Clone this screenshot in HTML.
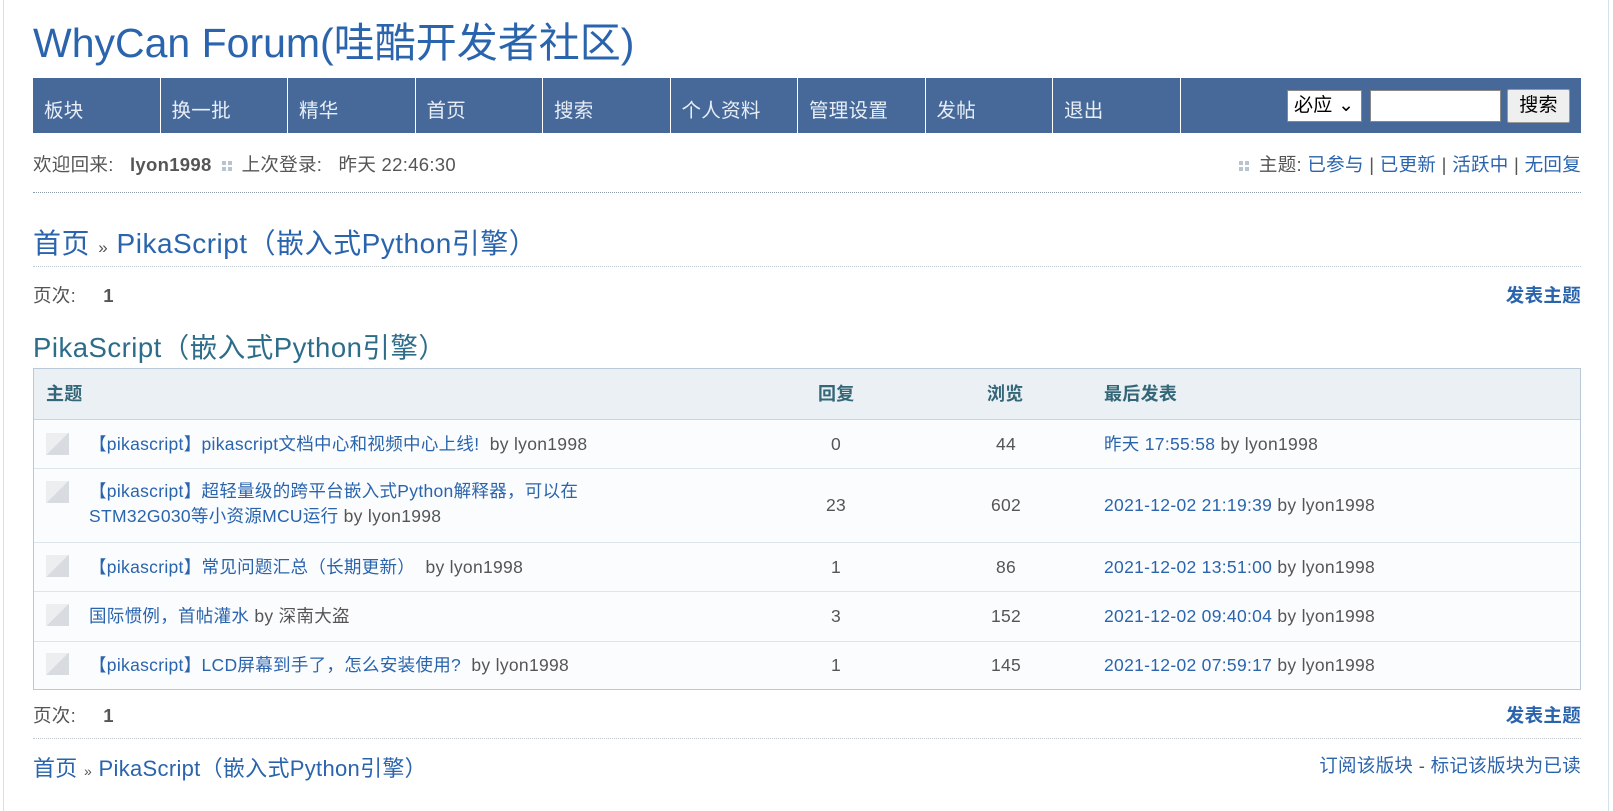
<!DOCTYPE html>
<html><head><meta charset="utf-8">
<style>
*{margin:0;padding:0;box-sizing:border-box}
html{overflow:hidden;height:811px}
body{width:1613px;height:811px;background:#fff;font-family:"Liberation Sans","Noto Sans CJK SC",sans-serif;font-size:17.5px;letter-spacing:.3px;color:#555;position:relative;overflow:hidden}
.frame{position:absolute;left:3px;top:0;width:1606px;height:811px;border:1px solid #d6e0ea;border-top:none;border-bottom:none}
.a{position:absolute;white-space:nowrap}
a{color:#2a64ad;text-decoration:none}
.title{left:33px;top:16px;font-size:41px;letter-spacing:0;color:#2a64ad;line-height:54px}
.nav{position:absolute;left:33px;top:78px;width:1548px;height:55px;background:#46699a}
.nav span{position:absolute;top:0;height:55px;line-height:66px;color:#e8eef6;font-size:19.5px;padding-left:11px;border-right:1px solid #fff;width:127.5px}
.sel{position:absolute;left:1287px;top:90px;width:75px;height:32px;background:#fff;border:1px solid #888;font-size:19px;color:#000;padding-left:6px;line-height:30px}
.inp{position:absolute;left:1370px;top:90px;width:131px;height:32px;background:#fff;border:1px solid #888}
.btn{position:absolute;left:1507px;top:89px;width:63px;height:34px;background:#efefef;border:1px solid #999;border-radius:2px;font-size:19px;color:#000;text-align:center;line-height:32px}
.dot{position:absolute;left:33px;width:1548px;border-top:1px dotted #8a98a8}
.dot2{position:absolute;left:33px;width:1548px;border-top:1px dotted #c0c8d0}
.sq{display:inline-block;width:10px;height:10px;background:linear-gradient(#b8c4d0,#b8c4d0) 0 0/4px 4px no-repeat,linear-gradient(#b8c4d0,#b8c4d0) 6px 0/4px 4px no-repeat,linear-gradient(#b8c4d0,#b8c4d0) 0 6px/4px 4px no-repeat,linear-gradient(#b8c4d0,#b8c4d0) 6px 6px/4px 4px no-repeat;vertical-align:middle;margin:0 10px}
.tbl{position:absolute;left:33px;top:368px;width:1548px;height:322px;border:1px solid #b9c9d8;background:#fbfcfe}
.hdr{position:absolute;left:0;top:0;width:100%;height:51px;background:#eaf0f4;border-bottom:1px solid #c8d4de}
.th{position:absolute;top:0;line-height:51px;font-weight:bold;color:#336677;font-size:18px}
.row{position:absolute;left:0;width:100%;border-bottom:1px solid #dce4ec}
.ic{position:absolute;left:12px;width:23px;height:22px;background:linear-gradient(135deg,#eceef0 50%,#d8dce0 50%)}
.t{position:absolute;left:55px;line-height:25px;color:#2a64ad}
.by{color:#555}
.c{position:absolute;text-align:center;width:60px;line-height:25px}
</style></head><body>
<div class="frame"></div>
<div class="a title">WhyCan Forum(哇酷开发者社区)</div>
<div class="nav">
<span style="left:0">板块</span><span style="left:127.5px">换一批</span><span style="left:255px">精华</span><span style="left:382.5px">首页</span><span style="left:510px">搜索</span><span style="left:637.5px">个人资料</span><span style="left:765px">管理设置</span><span style="left:892.5px">发帖</span><span style="left:1020px">退出</span>
</div>
<div class="sel">必应 ⌄</div><div class="inp"></div><div class="btn">搜索</div>
<div class="a" style="left:33px;top:151px;font-size:18.5px">欢迎回来: &nbsp;&nbsp;<b>lyon1998</b><span class="sq"></span>上次登录: &nbsp;&nbsp;昨天 22:46:30</div>
<div class="a" style="right:32px;top:151px;font-size:18.5px"><span class="sq"></span>主题: <a>已参与</a> | <a>已更新</a> | <a>活跃中</a> | <a>无回复</a></div>
<div class="dot" style="top:192px"></div>
<div class="a" style="left:33px;top:222px;font-size:28px;letter-spacing:.5px;color:#2a64ad"><a>首页</a> <span style="font-size:17px;color:#555">»</span> <a>PikaScript（嵌入式Python引擎）</a></div>
<div class="dot2" style="top:266px"></div>
<div class="a" style="left:33px;top:282px;font-size:18.5px">页次: &nbsp;&nbsp;&nbsp;&nbsp;<b>1</b></div>
<div class="a" style="right:32px;top:282px;font-size:18.5px;font-weight:bold;color:#2a64ad">发表主题</div>
<div class="a" style="left:33px;top:325px;font-size:27.5px;letter-spacing:.5px;color:#2d6d8a">PikaScript（嵌入式Python引擎）</div>
<div class="tbl">
<div class="hdr"><span class="th" style="left:12px">主题</span><span class="th" style="left:784px">回复</span><span class="th" style="left:953px">浏览</span><span class="th" style="left:1070px">最后发表</span></div>
<div class="row" style="top:51px;height:49px"><div class="ic" style="top:13px"></div><div class="t" style="top:12px">【pikascript】pikascript文档中心和视频中心上线! &nbsp;<span class="by">by lyon1998</span></div><div class="c" style="left:772px;top:12px">0</div><div class="c" style="left:942px;top:12px">44</div><div class="t" style="left:1070px;top:12px">昨天 17:55:58 <span class="by">by lyon1998</span></div></div>
<div class="row" style="top:100px;height:74px"><div class="ic" style="top:12px"></div><div class="t" style="top:10px">【pikascript】超轻量级的跨平台嵌入式Python解释器，可以在<br>STM32G030等小资源MCU运行 <span class="by">by lyon1998</span></div><div class="c" style="left:772px;top:24px">23</div><div class="c" style="left:942px;top:24px">602</div><div class="t" style="left:1070px;top:24px">2021-12-02 21:19:39 <span class="by">by lyon1998</span></div></div>
<div class="row" style="top:174px;height:49px"><div class="ic" style="top:12px"></div><div class="t" style="top:12px">【pikascript】常见问题汇总（长期更新） &nbsp;<span class="by">by lyon1998</span></div><div class="c" style="left:772px;top:12px">1</div><div class="c" style="left:942px;top:12px">86</div><div class="t" style="left:1070px;top:12px">2021-12-02 13:51:00 <span class="by">by lyon1998</span></div></div>
<div class="row" style="top:223px;height:50px"><div class="ic" style="top:12px"></div><div class="t" style="top:12px">国际惯例，首帖灌水 <span class="by">by 深南大盗</span></div><div class="c" style="left:772px;top:12px">3</div><div class="c" style="left:942px;top:12px">152</div><div class="t" style="left:1070px;top:12px">2021-12-02 09:40:04 <span class="by">by lyon1998</span></div></div>
<div class="row" style="top:273px;height:48px;border:none"><div class="ic" style="top:11px"></div><div class="t" style="top:11px">【pikascript】LCD屏幕到手了，怎么安装使用? &nbsp;<span class="by">by lyon1998</span></div><div class="c" style="left:772px;top:11px">1</div><div class="c" style="left:942px;top:11px">145</div><div class="t" style="left:1070px;top:11px">2021-12-02 07:59:17 <span class="by">by lyon1998</span></div></div>
</div>
<div class="a" style="left:33px;top:702px;font-size:18.5px">页次: &nbsp;&nbsp;&nbsp;&nbsp;<b>1</b></div>
<div class="a" style="right:32px;top:702px;font-size:18.5px;font-weight:bold;color:#2a64ad">发表主题</div>
<div class="dot2" style="top:738px"></div>
<div class="a" style="left:33px;top:751px;font-size:22px"><a>首页</a> <span style="font-size:14px;color:#555">»</span> <a>PikaScript（嵌入式Python引擎）</a></div>
<div class="a" style="right:32px;top:752px;font-size:18.5px"><a>订阅该版块</a> - <a>标记该版块为已读</a></div>
</body></html>
